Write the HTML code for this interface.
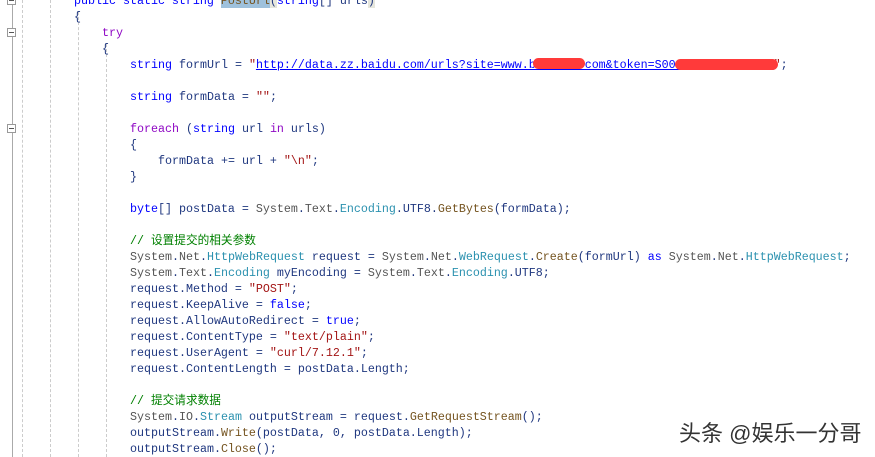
<!DOCTYPE html>
<html><head><meta charset="utf-8"><style>
html,body{margin:0;width:875px;height:457px;overflow:hidden}
body{background:#fff;position:relative;font-family:"Liberation Mono","Noto Sans CJK SC",monospace;font-size:11.67px;color:#1f377f}
.l{position:absolute;left:0;height:16px;line-height:16px;white-space:pre}
.k{color:#0000ff}.p{color:#8f08c4}.t{color:#2b91af}.m{color:#74531f}.s{color:#a31515}.c{color:#008000}.g{color:#555}.u{color:#0000ff;text-decoration:underline}
.gl{position:absolute;top:0;bottom:0;width:0}
.fold{position:absolute;left:7px;width:9px;height:9px;border:1px solid #999;background:#fff;box-sizing:border-box}
.fold:after{content:"";position:absolute;left:1px;top:3px;width:5px;height:1px;background:#555}
.red{position:absolute;background:#ff3a3a;border-radius:6px;height:11px}
</style></head><body>
<div class="gl" style="left:12px;border-left:1px solid #aaa"></div>
<div class="gl" style="left:22px;border-left:1px dashed #ccc"></div>
<div class="gl" style="left:50px;border-left:1px dashed #ccc"></div>
<div class="gl" style="left:78px;top:12px;border-left:1px dashed #ccc"></div>
<div class="gl" style="left:106px;top:44px;border-left:1px dashed #ccc"></div>
<div class="fold" style="top:-4px"></div>
<div class="fold" style="top:28px"></div>
<div class="fold" style="top:124px"></div>
<div class="l" style="top:-7px;left:74px"><span class="k">public static string</span> <span class="m" style="background:#9ec1dc">PostUrl</span><span style="background:#e6e6dc">(</span><span class="k">string</span>[] urls<span style="background:#e6e6dc">)</span></div>
<div class="l" style="top:9px;left:74px">{</div>
<div class="l" style="top:25px;left:102px"><span class="p">try</span></div>
<div class="l" style="top:41px;left:102px">{</div>
<div class="l" style="top:57px;left:130px"><span class="k">string</span> formUrl = <span class="s">"</span><span class="u">http://data.zz.baidu.com/urls?site=www.baidudu.com&amp;token=S0000000000000000</span><span class="s">"</span>;</div>
<div class="red" style="left:533px;top:58px;width:52px"></div>
<div class="red" style="left:675px;top:59px;width:103px"></div>
<div class="l" style="top:89px;left:130px"><span class="k">string</span> formData = <span class="s">""</span>;</div>
<div class="l" style="top:121px;left:130px"><span class="p">foreach</span> (<span class="k">string</span> url <span class="p">in</span> urls)</div>
<div class="l" style="top:137px;left:130px">{</div>
<div class="l" style="top:153px;left:158px">formData += url + <span class="s">"\n"</span>;</div>
<div class="l" style="top:169px;left:130px">}</div>
<div class="l" style="top:201px;left:130px"><span class="k">byte</span>[] postData = <span class="g">System</span>.<span class="g">Text</span>.<span class="t">Encoding</span>.UTF8.<span class="m">GetBytes</span>(formData);</div>
<div class="l c" style="top:233px;left:130px">// 设置提交的相关参数</div>
<div class="l" style="top:249px;left:130px"><span class="g">System</span>.<span class="g">Net</span>.<span class="t">HttpWebRequest</span> request = <span class="g">System</span>.<span class="g">Net</span>.<span class="t">WebRequest</span>.<span class="m">Create</span>(formUrl) <span class="k">as</span> <span class="g">System</span>.<span class="g">Net</span>.<span class="t">HttpWebRequest</span>;</div>
<div class="l" style="top:265px;left:130px"><span class="g">System</span>.<span class="g">Text</span>.<span class="t">Encoding</span> myEncoding = <span class="g">System</span>.<span class="g">Text</span>.<span class="t">Encoding</span>.UTF8;</div>
<div class="l" style="top:281px;left:130px">request.Method = <span class="s">"POST"</span>;</div>
<div class="l" style="top:297px;left:130px">request.KeepAlive = <span class="k">false</span>;</div>
<div class="l" style="top:313px;left:130px">request.AllowAutoRedirect = <span class="k">true</span>;</div>
<div class="l" style="top:329px;left:130px">request.ContentType = <span class="s">"text/plain"</span>;</div>
<div class="l" style="top:345px;left:130px">request.UserAgent = <span class="s">"curl/7.12.1"</span>;</div>
<div class="l" style="top:361px;left:130px">request.ContentLength = postData.Length;</div>
<div class="l c" style="top:393px;left:130px">// 提交请求数据</div>
<div class="l" style="top:409px;left:130px"><span class="g">System</span>.<span class="g">IO</span>.<span class="t">Stream</span> outputStream = request.<span class="m">GetRequestStream</span>();</div>
<div class="l" style="top:425px;left:130px">outputStream.<span class="m">Write</span>(postData, 0, postData.Length);</div>
<div class="l" style="top:441px;left:130px">outputStream.<span class="m">Close</span>();</div>
<div style="position:absolute;left:679px;top:416px;font-family:'Liberation Sans','Noto Sans CJK SC',sans-serif;font-size:22px;color:#333;text-shadow:0 0 2px #fff;white-space:nowrap">头条 @娱乐一分哥</div>
</body></html>
